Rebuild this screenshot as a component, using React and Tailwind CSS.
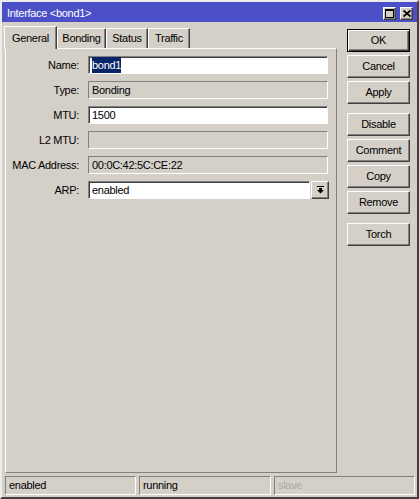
import React from 'react';

const font = { fontFamily: '"Liberation Sans", Arial, sans-serif', letterSpacing: '-0.3px' };

const raised =
  'border border-t-white border-l-white border-r-[#404040] border-b-[#404040] shadow-[inset_-1px_-1px_0_#808080]';
const sunken =
  'border border-t-[#808080] border-l-[#808080] border-r-white border-b-white';

const Field = ({ value, editable, selected }) => (
  <div
    className={`h-[18px] flex items-center px-[3px] text-[11px] text-black ${sunken} ${
      editable ? 'bg-white shadow-[inset_1px_1px_0_#404040]' : 'bg-[#d4d0c8]'
    }`}
  >
    {selected ? <span className="bg-[#0a246a] text-white">{value}</span> : value}
  </div>
);

const Btn = ({ children, main }) => (
  <div
    className={`h-[23px] w-[63px] flex items-center justify-center text-[11px] text-black bg-[#d4d0c8] ${
      main
        ? 'border border-black shadow-[inset_1px_1px_0_white,inset_-1px_-1px_0_#404040,inset_-2px_-2px_0_#808080]'
        : raised
    }`}
  >
    {children}
  </div>
);

const Tab = ({ label, active, w }) => (
  <div
    className={`flex items-center justify-center text-[11px] text-black bg-[#d4d0c8] border-t border-l border-r border-t-white border-l-white border-r-[#404040] shadow-[inset_-1px_0_0_#808080] ${
      active ? 'h-[23px] relative z-10 -mb-px' : 'h-[20px] mt-[2px]'
    }`}
    style={{ width: w }}
  >
    {label}
  </div>
);

const rows = [
  { label: 'Name:', value: 'bond1', editable: true, selected: true },
  { label: 'Type:', value: 'Bonding' },
  { label: 'MTU:', value: '1500', editable: true },
  { label: 'L2 MTU:', value: '' },
  { label: 'MAC Address:', value: '00:0C:42:5C:CE:22' },
];

export default function App() {
  return (
    <div className="w-[419px] h-[499px] bg-[#d4d0c8] overflow-hidden" style={font}>
      <div className="w-full h-full flex flex-col border-2 border-t-[#ececec] border-l-[#ececec] border-r-[#404040] border-b-[#404040]">
        {/* title bar */}
        <div className="h-[20px] bg-[#4c50c8] flex items-center justify-between pl-[5px] pr-[4px]">
          <span className="text-white text-[11px] pt-[2px]">Interface &lt;bond1&gt;</span>
          <div className="flex gap-[4px] pt-[3px]">
            <div className={`w-[13px] h-[13px] bg-[#d4d0c8] flex items-center justify-center ${raised}`}>
              <svg width="9" height="9" viewBox="0 0 9 9">
                <rect x="0.5" y="0.5" width="8" height="8" fill="none" stroke="black" />
                <rect x="0" y="0" width="9" height="2" fill="black" />
              </svg>
            </div>
            <div className={`w-[13px] h-[13px] bg-[#d4d0c8] flex items-center justify-center ${raised}`}>
              <svg width="8" height="7" viewBox="0 0 8 7">
                <path d="M0.5 0.5 L7.5 6.5 M7.5 0.5 L0.5 6.5" stroke="black" strokeWidth="1.8" />
              </svg>
            </div>
          </div>
        </div>

        {/* body */}
        <div className="flex pt-[4px] pl-[2px] pr-[5px]">
          <div className="w-[333px] flex flex-col">
            <div className="flex h-[22px] items-start">
              <Tab label="General" active w={53} />
              <Tab label="Bonding" w={49} />
              <Tab label="Status" w={42} />
              <Tab label="Traffic" w={42} />
            </div>
            <div className="h-[425px] ml-px border border-t-white border-l-white border-r-[#808080] border-b-[#808080] pt-[7px] pr-[8px]">
              <div className="grid grid-cols-[73px_1fr] gap-x-[9px] gap-y-[7px] items-center">
                {rows.map((r) => (
                  <React.Fragment key={r.label}>
                    <div className="text-right text-[11px] text-black">{r.label}</div>
                    <Field value={r.value} editable={r.editable} selected={r.selected} />
                  </React.Fragment>
                ))}
                <div className="text-right text-[11px] text-black">ARP:</div>
                <div className="flex gap-px">
                  <div className="flex-1">
                    <Field value="enabled" editable />
                  </div>
                  <div className={`w-[18px] h-[18px] -mr-px bg-[#d4d0c8] flex items-center justify-center ${raised}`}>
                    <svg width="7" height="8" viewBox="0 0 7 8">
                      <rect x="0" y="0" width="7" height="1" fill="black" />
                      <rect x="2" y="2" width="3" height="2" fill="black" />
                      <path d="M0 4 H7 L3.5 7.5 Z" fill="black" />
                    </svg>
                  </div>
                </div>
              </div>
            </div>
          </div>

          <div className="ml-[10px] mt-[3px] flex flex-col">
            <div className="flex flex-col gap-[3px]">
              <Btn main>OK</Btn>
              <Btn>Cancel</Btn>
              <Btn>Apply</Btn>
            </div>
            <div className="flex flex-col gap-[3px] mt-[9px]">
              <Btn>Disable</Btn>
              <Btn>Comment</Btn>
              <Btn>Copy</Btn>
              <Btn>Remove</Btn>
            </div>
            <div className="mt-[9px]">
              <Btn>Torch</Btn>
            </div>
          </div>
        </div>

        {/* status bar */}
        <div className="mt-[3px] h-[19px] flex gap-[3px] pl-[3px] pr-[2px]">
          {[
            { t: 'enabled', w: 'w-[131px]' },
            { t: 'running', w: 'w-[132px]' },
            { t: 'slave', w: 'flex-1', dim: true },
          ].map((c) => (
            <div
              key={c.t}
              className={`${c.w} h-full flex items-center px-[3px] text-[11px] ${sunken} ${
                c.dim ? 'text-[#a8a8a8]' : 'text-black'
              }`}
            >
              {c.t}
            </div>
          ))}
        </div>
      </div>
    </div>
  );
}
